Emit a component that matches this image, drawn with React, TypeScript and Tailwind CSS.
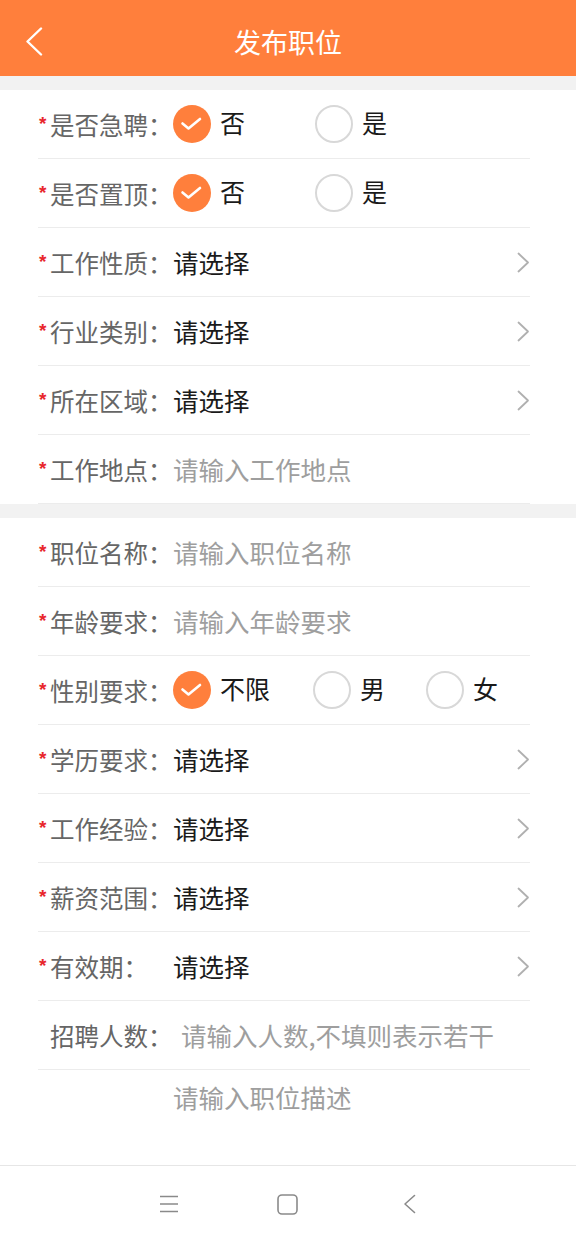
import React from "react";

function Chevron() {
  return (
    <svg width="13" height="21" viewBox="0 0 13 21" className="ml-auto shrink-0">
      <path d="M1.5 1.5 L11 10.5 L1.5 19.5" fill="none" stroke="#b0b0b0" strokeWidth="1.8" strokeLinecap="round" strokeLinejoin="round" />
    </svg>
  );
}

function Radio({ checked }: { checked: boolean }) {
  return checked ? (
    <span className="w-[38px] h-[38px] rounded-full bg-[#FF7F3C] flex items-center justify-center shrink-0">
      <svg width="38" height="38" viewBox="0 0 38 38">
        <path d="M9.5 18.5 L15.5 23.5 L27 14" fill="none" stroke="#ffffff" strokeWidth="2.6" strokeLinecap="round" strokeLinejoin="round" />
      </svg>
    </span>
  ) : (
    <span className="w-[38px] h-[38px] rounded-full border-2 border-[#d8d8d8] shrink-0" />
  );
}

function Label({ text, required = true }: { text: string; required?: boolean }) {
  return (
    <div className="w-[135px] shrink-0 flex items-start">
      <span className="w-[12px] text-[19px] leading-none font-bold text-[#e8262c] font-['Liberation_Sans',sans-serif] pl-[1px] mt-[2px]">
        {required ? "*" : ""}
      </span>
      <span className="text-[24.5px] leading-[25px] text-[#666666]">{text}</span>
    </div>
  );
}

function Row({ children }: { children: React.ReactNode }) {
  return <div className="h-[69px] border-b border-[#ececec] flex items-center">{children}</div>;
}

function SelectRow({ label }: { label: string }) {
  return (
    <Row>
      <Label text={label} />
      <span className="text-[25.5px] leading-[26px] text-[#1a1a1a]">请选择</span>
      <Chevron />
    </Row>
  );
}

function InputRow({ label, placeholder, required = true, extra = false }: { label: string; placeholder: string; required?: boolean; extra?: boolean }) {
  return (
    <Row>
      <Label text={label} required={required} />
      <span className={extra ? "ml-[8px] text-[25.5px] leading-[26px] text-[#9e9e9e]" : "text-[25.5px] leading-[26px] text-[#9e9e9e]"}>{placeholder}</span>
    </Row>
  );
}

function Option({ checked, text, width }: { checked: boolean; text: string; width: string }) {
  return (
    <div className={"flex items-center shrink-0 " + width}>
      <Radio checked={checked} />
      <span className="ml-[9px] text-[25px] leading-[26px] text-[#1a1a1a] -mt-[4px]">{text}</span>
    </div>
  );
}

export default function App() {
  return (
    <div className="w-[576px] h-[1242px] flex flex-col bg-white font-['Noto_Sans_CJK_SC','Noto_Sans',sans-serif] overflow-hidden">
      <header className="h-[76px] shrink-0 bg-[#FF7F3C] grid grid-cols-[1fr_auto_1fr] items-center pt-[7px]">
        <div className="pl-[25px] flex items-center">
          <svg width="19" height="29" viewBox="0 0 19 29">
            <path d="M16 1.5 L2.5 14.5 L16 27.5" fill="none" stroke="#ffffff" strokeWidth="2.4" strokeLinecap="round" strokeLinejoin="round" />
          </svg>
        </div>
        <h1 className="text-[27px] leading-[30px] text-white font-normal">发布职位</h1>
        <div />
      </header>

      <main className="flex-1 flex flex-col">
        <div className="h-[14px] bg-[#f2f2f2] shrink-0" />
        <section className="ml-[38px] mr-[46px]">
          <Row>
            <Label text="是否急聘：" />
            <Option checked text="否" width="w-[142px]" />
            <Option checked={false} text="是" width="w-[100px]" />
          </Row>
          <Row>
            <Label text="是否置顶：" />
            <Option checked text="否" width="w-[142px]" />
            <Option checked={false} text="是" width="w-[100px]" />
          </Row>
          <SelectRow label="工作性质：" />
          <SelectRow label="行业类别：" />
          <SelectRow label="所在区域：" />
          <InputRow label="工作地点：" placeholder="请输入工作地点" />
        </section>
        <div className="h-[14px] bg-[#f2f2f2] shrink-0" />
        <section className="ml-[38px] mr-[46px]">
          <InputRow label="职位名称：" placeholder="请输入职位名称" />
          <InputRow label="年龄要求：" placeholder="请输入年龄要求" />
          <Row>
            <Label text="性别要求：" />
            <Option checked text="不限" width="w-[140px]" />
            <Option checked={false} text="男" width="w-[113px]" />
            <Option checked={false} text="女" width="w-[80px]" />
          </Row>
          <SelectRow label="学历要求：" />
          <SelectRow label="工作经验：" />
          <SelectRow label="薪资范围：" />
          <SelectRow label="有效期：" />
          <InputRow label="招聘人数：" placeholder="请输入人数,不填则表示若干" required={false} extra />
        </section>
        <div className="ml-[38px] pl-[135px] pt-[9px] text-[25.5px] leading-[36px] text-[#9e9e9e]">请输入职位描述</div>
      </main>

      <nav className="h-[77px] shrink-0 border-t border-[#e6e6e6] flex items-center pl-[159px]">
        <svg width="20" height="18" viewBox="0 0 20 18">
          <path d="M1 1.5 H19 M1 9 H19 M1 16.5 H19" fill="none" stroke="#8a8a8a" strokeWidth="1.6" />
        </svg>
        <svg width="21" height="21" viewBox="0 0 21 21" className="ml-[98px]">
          <rect x="1" y="1" width="19" height="19" rx="4" fill="none" stroke="#8a8a8a" strokeWidth="1.6" />
        </svg>
        <svg width="13" height="20" viewBox="0 0 13 20" className="ml-[105px]">
          <path d="M11.5 1.5 L2 10 L11.5 18.5" fill="none" stroke="#8a8a8a" strokeWidth="1.6" strokeLinecap="round" strokeLinejoin="round" />
        </svg>
      </nav>
    </div>
  );
}
